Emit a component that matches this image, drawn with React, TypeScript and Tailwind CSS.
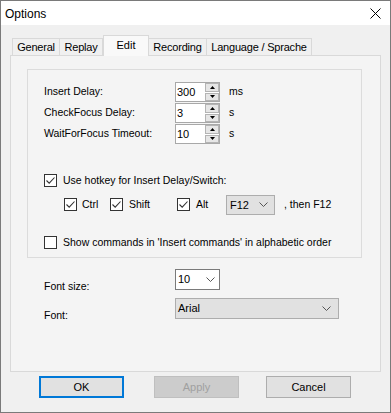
import React from "react";

function Check({ checked }: { checked?: boolean }) {
  return (
    <span className="w-[13px] h-[13px] border border-[#333333] bg-white flex items-center justify-center shrink-0">
      {checked && (
        <svg width="11" height="11" viewBox="0 0 11 11">
          <path d="M1.5 5.5 L4.2 8.2 L9.5 2.5" stroke="#333333" strokeWidth="1.1" fill="none" />
        </svg>
      )}
    </span>
  );
}

function Chevron() {
  return (
    <svg width="9" height="5" viewBox="0 0 9 5">
      <path d="M0.5 0.5 L4.5 4.5 L8.5 0.5" stroke="#555555" strokeWidth="1" fill="none" />
    </svg>
  );
}

function Spin({ value }: { value: string }) {
  return (
    <div className="flex h-[20px] w-[45px] border border-[#a8a8a8] bg-white">
      <span className="flex-1 pl-[1px] leading-[18px] text-[11px]">{value}</span>
      <div className="flex flex-col w-[14px] gap-px">
        <span className="flex-1 border border-[#b4b4b4] bg-[#e6e6e6] flex items-center justify-center">
          <svg width="5" height="3" viewBox="0 0 5 3">
            <path d="M2.5 0 L5 3 L0 3 Z" fill="#000" />
          </svg>
        </span>
        <span className="flex-1 border border-[#b4b4b4] bg-[#e6e6e6] flex items-center justify-center">
          <svg width="5" height="3" viewBox="0 0 5 3">
            <path d="M0 0 L5 0 L2.5 3 Z" fill="#000" />
          </svg>
        </span>
      </div>
    </div>
  );
}

const TABS = [
  { label: "General", w: "w-[48px]" },
  { label: "Replay", w: "w-[44px]" },
  { label: "Edit", w: "w-[46px]", active: true },
  { label: "Recording", w: "w-[59px]" },
  { label: "Language / Sprache", w: "w-[106px]" },
];

export default function App() {
  return (
    <div
      className="w-[391px] h-[413px] border border-[#7a7a7a] flex flex-col text-[10.5px] text-black bg-[#f0f0f0]"
      style={{ fontFamily: '"Liberation Sans", Arial, sans-serif' }}
    >
      {/* title bar */}
      <div className="h-[24px] bg-white flex items-center justify-between pl-[4px] pr-[9px]">
        <span className="text-[12px] pt-px">Options</span>
        <svg width="11" height="11" viewBox="0 0 11 11">
          <path d="M0.5 0.5 L10.5 10.5 M10.5 0.5 L0.5 10.5" stroke="#000" strokeWidth="1" />
        </svg>
      </div>

      <div className="flex-1 flex flex-col pl-[9px] pt-[10px]">
        {/* tabs */}
        <div className="flex items-end h-[21px] -mb-px ml-[2px] text-[11px]">
          {TABS.map((t) =>
            t.active ? (
              <div
                key={t.label}
                className={`${t.w} h-[21px] relative z-10 bg-[#f9f9f9] border border-b-0 border-[#d9d9d9] flex items-center justify-center pb-[2px]`}
              >
                {t.label}
              </div>
            ) : (
              <div
                key={t.label}
                className={`${t.w} h-[17px] mb-px bg-[#f0f0f0] border border-b-0 border-[#d9d9d9] -ml-px first:ml-0 flex items-center justify-center whitespace-nowrap tracking-[-0.2px]`}
              >
                {t.label}
              </div>
            )
          )}
        </div>

        {/* panel */}
        <div className="w-[371px] h-[317px] border border-[#d9d9d9] bg-[#f4f4f4] pl-[16px] pt-[13px]">
          <div className="w-[335px] h-[189px] border border-[#dcdcdc] pl-[16px] pt-[12px]">
            <div className="flex flex-col gap-px">
              {[
                ["Insert Delay:", "300", "ms"],
                ["CheckFocus Delay:", "3", "s"],
                ["WaitForFocus Timeout:", "10", "s"],
              ].map(([label, value, unit]) => (
                <div key={label} className="flex items-center">
                  <span className="w-[131px]">{label}</span>
                  <Spin value={value} />
                  <span className="ml-[9px]">{unit}</span>
                </div>
              ))}
            </div>

            <div className="flex items-center gap-[6px] mt-[29px]">
              <Check checked />
              <span>Use hotkey for Insert Delay/Switch:</span>
            </div>

            <div className="flex items-center mt-[6px] ml-[20px] h-[20px]">
              <Check checked />
              <span className="ml-[5px] w-[28px]">Ctrl</span>
              <Check checked />
              <span className="ml-[6px] w-[48px]">Shift</span>
              <Check checked />
              <span className="ml-[6px] w-[30px]">Alt</span>
              <div className="w-[49px] h-[20px] border border-[#adadad] bg-[#e1e1e1] flex items-center justify-between pl-[3px] pr-[6px] text-[11px]">
                <span>F12</span>
                <Chevron />
              </div>
              <span className="ml-[9px]">, then F12</span>
            </div>

            <div className="flex items-center gap-[6px] mt-[20px]">
              <Check />
              <span>Show commands in 'Insert commands' in alphabetic order</span>
            </div>
          </div>

          <div className="pl-[17px] mt-[11px] flex flex-col gap-[8px]">
            <div className="flex items-end">
              <span className="w-[131px] leading-[14px] -mb-[3px]">Font size:</span>
              <div className="w-[45px] h-[21px] border border-[#7a7a7a] bg-white flex items-center justify-between pl-[2px] pr-[4px] text-[11px]">
                <span>10</span>
                <Chevron />
              </div>
            </div>
            <div className="flex items-end">
              <span className="w-[131px] leading-[14px] -mb-[3px]">Font:</span>
              <div className="w-[164px] h-[21px] border border-[#adadad] bg-[#e1e1e1] flex items-center justify-between pl-[2px] pr-[7px] text-[11px]">
                <span>Arial</span>
                <Chevron />
              </div>
            </div>
          </div>
        </div>

        {/* buttons */}
        <div className="flex mt-[4px] ml-[29px] text-[11px]">
          <button className="w-[85px] h-[22px] border-2 border-[#0078d7] bg-[#e1e1e1]">OK</button>
          <button className="w-[85px] h-[22px] ml-[30px] border border-[#bfbfbf] bg-[#cccccc] text-[#a0a0a0]">
            Apply
          </button>
          <button className="w-[85px] h-[22px] ml-[27px] border border-[#adadad] bg-[#e1e1e1]">Cancel</button>
        </div>
      </div>
    </div>
  );
}
